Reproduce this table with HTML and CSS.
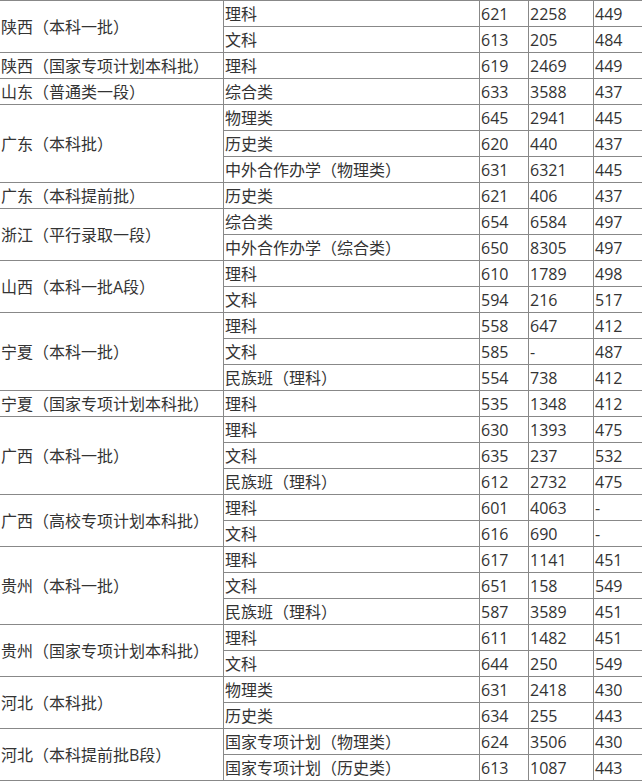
FILE: index.html
```html
<!DOCTYPE html>
<html lang="zh">
<head>
<meta charset="utf-8">
<title>录取分数</title>
<link rel="stylesheet" href="styles.css">
</head>
<body>
<table class="scores">
<colgroup>
<col class="c-prov"><col class="c-type"><col class="c-score"><col class="c-rank"><col class="c-line">
</colgroup>
<tbody>
<tr><td rowspan="2" class="prov">陕西（本科一批）</td><td>理科</td><td>621</td><td>2258</td><td>449</td></tr>
<tr><td>文科</td><td>613</td><td>205</td><td>484</td></tr>
<tr><td class="prov">陕西（国家专项计划本科批）</td><td>理科</td><td>619</td><td>2469</td><td>449</td></tr>
<tr><td class="prov">山东（普通类一段）</td><td>综合类</td><td>633</td><td>3588</td><td>437</td></tr>
<tr><td rowspan="3" class="prov">广东（本科批）</td><td>物理类</td><td>645</td><td>2941</td><td>445</td></tr>
<tr><td>历史类</td><td>620</td><td>440</td><td>437</td></tr>
<tr><td>中外合作办学（物理类）</td><td>631</td><td>6321</td><td>445</td></tr>
<tr><td class="prov">广东（本科提前批）</td><td>历史类</td><td>621</td><td>406</td><td>437</td></tr>
<tr><td rowspan="2" class="prov">浙江（平行录取一段）</td><td>综合类</td><td>654</td><td>6584</td><td>497</td></tr>
<tr><td>中外合作办学（综合类）</td><td>650</td><td>8305</td><td>497</td></tr>
<tr><td rowspan="2" class="prov">山西（本科一批A段）</td><td>理科</td><td>610</td><td>1789</td><td>498</td></tr>
<tr><td>文科</td><td>594</td><td>216</td><td>517</td></tr>
<tr><td rowspan="3" class="prov">宁夏（本科一批）</td><td>理科</td><td>558</td><td>647</td><td>412</td></tr>
<tr><td>文科</td><td>585</td><td>-</td><td>487</td></tr>
<tr><td>民族班（理科）</td><td>554</td><td>738</td><td>412</td></tr>
<tr><td class="prov">宁夏（国家专项计划本科批）</td><td>理科</td><td>535</td><td>1348</td><td>412</td></tr>
<tr><td rowspan="3" class="prov">广西（本科一批）</td><td>理科</td><td>630</td><td>1393</td><td>475</td></tr>
<tr><td>文科</td><td>635</td><td>237</td><td>532</td></tr>
<tr><td>民族班（理科）</td><td>612</td><td>2732</td><td>475</td></tr>
<tr><td rowspan="2" class="prov">广西（高校专项计划本科批）</td><td>理科</td><td>601</td><td>4063</td><td>-</td></tr>
<tr><td>文科</td><td>616</td><td>690</td><td>-</td></tr>
<tr><td rowspan="3" class="prov">贵州（本科一批）</td><td>理科</td><td>617</td><td>1141</td><td>451</td></tr>
<tr><td>文科</td><td>651</td><td>158</td><td>549</td></tr>
<tr><td>民族班（理科）</td><td>587</td><td>3589</td><td>451</td></tr>
<tr><td rowspan="2" class="prov">贵州（国家专项计划本科批）</td><td>理科</td><td>611</td><td>1482</td><td>451</td></tr>
<tr><td>文科</td><td>644</td><td>250</td><td>549</td></tr>
<tr><td rowspan="2" class="prov">河北（本科批）</td><td>物理类</td><td>631</td><td>2418</td><td>430</td></tr>
<tr><td>历史类</td><td>634</td><td>255</td><td>443</td></tr>
<tr><td rowspan="2" class="prov">河北（本科提前批B段）</td><td>国家专项计划（物理类）</td><td>624</td><td>3506</td><td>430</td></tr>
<tr><td>国家专项计划（历史类）</td><td>613</td><td>1087</td><td>443</td></tr>
</tbody>
</table>
</body>
</html>
```
FILE: styles.css
```css
html, body {
  margin: 0;
  padding: 0;
  background: #fff;
  overflow: hidden;
}
.scores {
  border-collapse: collapse;
  table-layout: fixed;
  width: 674px;
  margin-left: -1px;
  font-family: "Open Sans", "Noto Sans CJK SC", sans-serif;
  font-size: 16px;
  color: #333;
}
.c-prov { width: 224px; }
.c-type { width: 256px; }
.c-score { width: 49px; }
.c-rank { width: 65px; }
.c-line { width: 80px; }
.scores td {
  border: 1px solid #888;
  height: 23px;
  padding: 2px 1px 0;
  line-height: 23px;
  vertical-align: middle;
  white-space: nowrap;
  overflow: hidden;
}
```
